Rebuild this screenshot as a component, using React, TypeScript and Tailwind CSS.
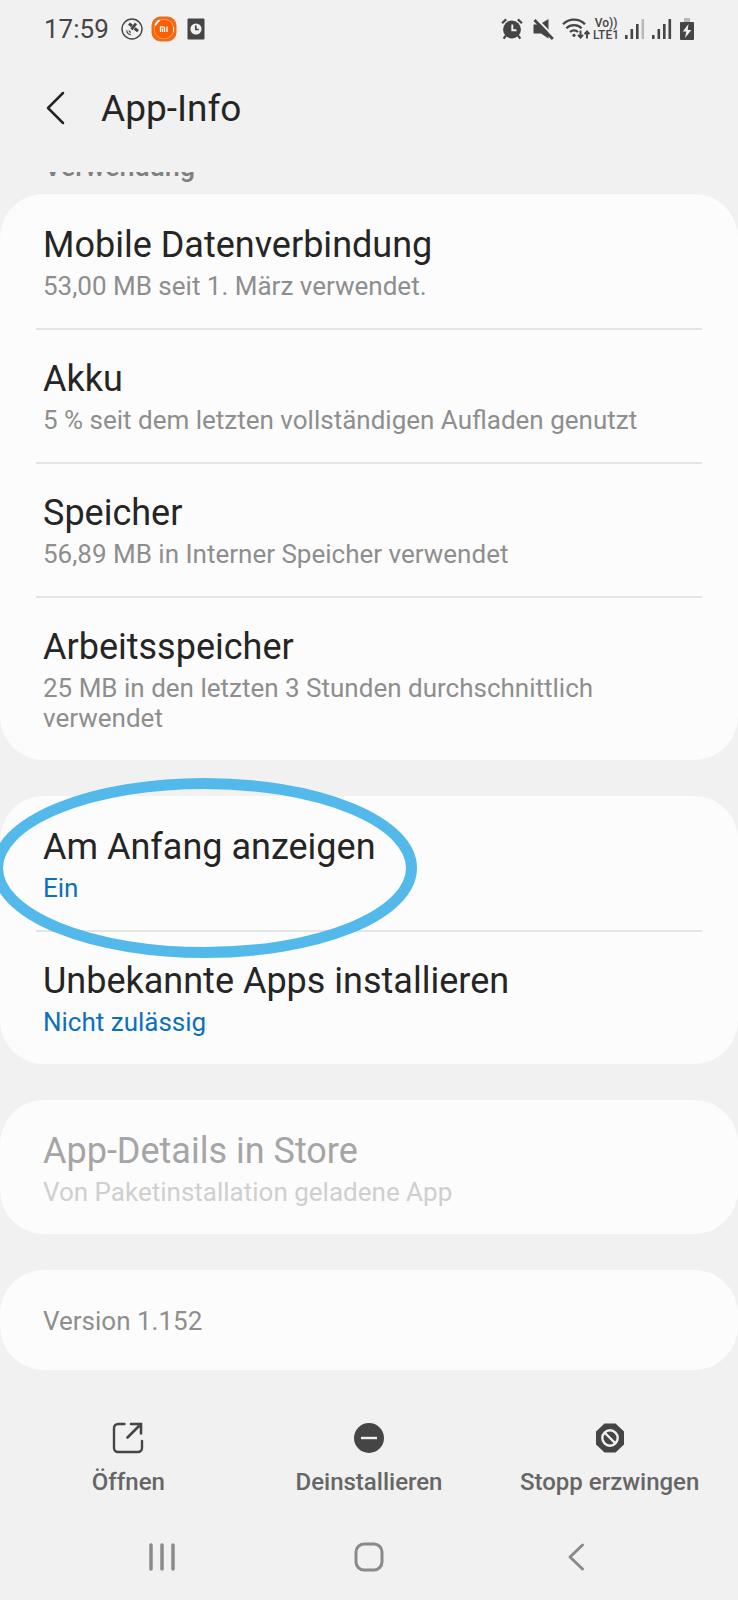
import type { ReactNode } from "react";

interface Item {
  title: string;
  sub: string;
  tone?: "link" | "disabled";
}

const USAGE: Item[] = [
  { title: "Mobile Datenverbindung", sub: "53,00 MB seit 1. März verwendet." },
  { title: "Akku", sub: "5 % seit dem letzten vollständigen Aufladen genutzt" },
  { title: "Speicher", sub: "56,89 MB in Interner Speicher verwendet" },
  { title: "Arbeitsspeicher", sub: "25 MB in den letzten 3 Stunden durchschnittlich verwendet" },
];

const SPECIAL: Item[] = [
  { title: "Am Anfang anzeigen", sub: "Ein", tone: "link" },
  { title: "Unbekannte Apps installieren", sub: "Nicht zulässig", tone: "link" },
];

const STORE: Item[] = [
  { title: "App-Details in Store", sub: "Von Paketinstallation geladene App", tone: "disabled" },
];

function Card({ items, children }: { items: Item[]; children?: ReactNode }) {
  return (
    <section className="relative rounded-[44px] bg-[#fcfcfc]">
      <ul>
        {items.map((item, i) => (
          <li key={item.title}>
            {i > 0 && <div className="mx-9 -mb-0.5 h-0.5 bg-[#e4e4e4]" />}
            <button
              type="button"
              disabled={item.tone === "disabled"}
              className="block w-full px-[43px] pt-[30px] pb-[27px] text-left"
            >
              <span
                className={`block text-[36px] leading-[42px] ${
                  item.tone === "disabled" ? "text-[#a5a5a5]" : "text-[#252525]"
                }`}
              >
                {item.title}
              </span>
              <span
                className={`mt-[5px] block text-[26px] leading-[30px] ${
                  item.tone === "link"
                    ? "text-[#0d70bd]"
                    : item.tone === "disabled"
                      ? "text-[#cfcfcf]"
                      : "text-[#8e8e8e]"
                }`}
              >
                {item.sub}
              </span>
            </button>
          </li>
        ))}
      </ul>
      {children}
    </section>
  );
}

function SignalBars({ weak }: { weak?: boolean }) {
  return (
    <svg width="20" height="22" viewBox="0 0 20 22" fill="#454545">
      <rect x="0" y="17" width="2.6" height="4" />
      <rect x="5.5" y="11" width="2.6" height="10" />
      <rect x="11" y="6" width="2.6" height="15" />
      <rect x="16.5" y="1" width="2.6" height="20" fill={weak ? "#b9b9b9" : "#454545"} />
    </svg>
  );
}

function StatusBar() {
  return (
    <div className="flex h-[57px] items-center justify-between pr-11 pl-11 text-[#454545]">
      <div className="flex items-center">
        <span className="text-[26px] leading-8">17:59</span>
        {/* Satellite */}
        <svg className="ml-3" width="22" height="22" viewBox="0 0 22 22" fill="none" stroke="#454545">
          <circle cx="11" cy="11" r="10" strokeWidth="1.4" />
          <path d="M8 5.600l3 2.400M13.600 10.400l3.400 2.800" strokeWidth="3" />
          <path d="M15 5.500L10.400 11.400" strokeWidth="2.8" />
          <path d="M5.800 12.200a4.600 4.600 0 0 0 4 4.400M8 12.400a2.400 2.400 0 0 0 1.900 2" strokeWidth="1.1" />
        </svg>
        {/* Mi */}
        <svg className="ml-2" width="26" height="26" viewBox="0 0 26 26">
          <rect x="0.5" y="0.5" width="25" height="25" rx="9" fill="#f26a12" />
          <circle cx="13" cy="13" r="9.8" fill="#fb5f04" stroke="#ff9a55" strokeWidth="1.1" />
          <path d="M4.600 8.600a9.600 9.600 0 0 1 3.400-3.900" fill="none" stroke="#fff" strokeWidth="2" strokeLinecap="round" />
          <path d="M22.600 11.500v4" fill="none" stroke="#fff" strokeWidth="1" strokeLinecap="round" />
          <path
            d="M9.500 16v-5.200h2.600a1.400 1.400 0 0 1 1.400 1.400V16M11.500 12.600V16M16 10.500V16"
            fill="none"
            stroke="#fff"
            strokeWidth="1.3"
          />
        </svg>
        {/* Clock */}
        <svg className="ml-2.5" width="18" height="22" viewBox="0 0 18 22">
          <rect x="0.5" y="0.5" width="17" height="21" rx="1" fill="#454545" />
          <circle cx="9" cy="11" r="5.600" fill="#f1f1f1" />
          <path d="M8.800 7.500v4h3" fill="none" stroke="#454545" strokeWidth="1.7" />
        </svg>
      </div>
      <div className="flex items-center">
        {/* Alarm */}
        <svg width="22" height="22" viewBox="0 0 22 22" fill="none" stroke="#454545">
          <circle cx="11" cy="11.5" r="8.900" fill="#454545" stroke="none" />
          <path d="M1 5.200l4.200-3.800M21 5.200l-4.200-3.800M5 17.500L2.600 20.600M17 17.500l2.400 3.100" strokeWidth="2.2" />
          <path d="M11.300 6.500v5.700h4.200" stroke="#f1f1f1" strokeWidth="1.9" />
        </svg>
        {/* Muted speaker */}
        <svg className="ml-2.5" width="21" height="22" viewBox="0 0 21 22">
          <path d="M0.500 6.500h6L15.500 1v19.500L8 15.500H0.500z" fill="#454545" />
          <path d="M3.800 1L20 17.700" stroke="#f1f1f1" strokeWidth="2" />
          <path d="M1.500 2L19.800 21" stroke="#454545" strokeWidth="2.800" />
        </svg>
        {/* Wi-Fi */}
        <svg className="ml-2" width="29" height="22" viewBox="0 0 29 22" fill="none" stroke="#454545">
          <path d="M1 6.300a15.500 15.500 0 0 1 22 0M4.300 10.300a11 11 0 0 1 15.400 0M8 14a6 6 0 0 1 8 0" strokeWidth="2.300" />
          <circle cx="12" cy="17.300" r="1.600" fill="#454545" stroke="none" />
          <path d="M18.500 12.500v7M16 16.800l2.500 2.700 2.500-2.700M25 20.500v-7M22.500 16.200l2.500-2.700 2.500 2.700" strokeWidth="1.900" />
        </svg>
        <span className="ml-0.5 flex flex-col items-center text-[12px] leading-[12px] font-medium">
          <span>Vo))</span>
          <span>LTE1</span>
        </span>
        <span className="ml-1.5 flex gap-[7px]">
          <SignalBars weak />
          <SignalBars />
        </span>
        {/* Battery */}
        <svg className="ml-2" width="14" height="22" viewBox="0 0 14 22">
          <rect x="4" y="0" width="6" height="5" fill="#b9b9b9" />
          <rect x="0" y="4" width="14" height="18" rx="1" fill="#454545" />
          <path d="M8.500 6L2.800 13.500h3.500L5 20l6.300-8H7.700z" fill="#f1f1f1" />
        </svg>
      </div>
    </div>
  );
}

const ACTIONS = [
  {
    label: "Öffnen",
    icon: (
      <svg width="32" height="32" viewBox="0 0 32 32" fill="none" stroke="#454545" strokeWidth="2.4" strokeLinecap="round">
        <path d="M12.500 2H6a4 4 0 0 0-4 4v20a4 4 0 0 0 4 4h20a4 4 0 0 0 4-4v-7" />
        <path d="M19 2h10v9.500M28.500 2.500L15.500 15.500" strokeWidth="2.600" />
      </svg>
    ),
  },
  {
    label: "Deinstallieren",
    icon: (
      <svg width="32" height="32" viewBox="0 0 32 32">
        <circle cx="16" cy="16" r="15" fill="#454545" />
        <path d="M8 16h16" stroke="#f1f1f1" strokeWidth="2.400" />
      </svg>
    ),
  },
  {
    label: "Stopp erzwingen",
    icon: (
      <svg width="32" height="32" viewBox="0 0 32 32">
        <path d="M10.500 1.500h11l8.500 8v13l-8.500 8h-11l-8.500-8v-13z" fill="#454545" />
        <circle cx="16" cy="16" r="7.700" fill="none" stroke="#f1f1f1" strokeWidth="2.400" />
        <path d="M10.500 10.500l11 11" stroke="#f1f1f1" strokeWidth="2.400" />
      </svg>
    ),
  },
];

export default function App() {
  return (
    <div className="flex min-h-screen flex-col overflow-hidden bg-[#f1f1f1] font-[Roboto,sans-serif]">
      <StatusBar />

      <header className="flex h-[104px] items-center pl-11">
        <button type="button" aria-label="Zurück" className="flex h-12 w-[57px] items-center">
          <svg width="24" height="36" viewBox="0 0 24 36" fill="none" stroke="#252525" strokeWidth="2.500" strokeLinecap="round" strokeLinejoin="round">
            <path d="M19 2L4 17l15 15" />
          </svg>
        </button>
        <h1 className="text-[37px] leading-[44px] text-[#252525]">App-Info</h1>
      </header>

      <main className="mt-[11px] flex-1">
        {/* Section heading, half scrolled under the header */}
        <div className="flex h-[22px] items-end overflow-hidden px-11">
          <h2 className="text-[27px] leading-[54px] font-medium text-[#808080]">Verwendung</h2>
        </div>

        <div className="flex flex-col gap-9">
          <Card items={USAGE} />
          <Card items={SPECIAL}>
            {/* Highlight ring */}
            <svg
              className="pointer-events-none absolute -top-[18px] -left-2"
              width="425"
              height="180"
              viewBox="0 0 425 180"
              fill="none"
            >
              <ellipse cx="212.500" cy="90" rx="207" ry="84.500" stroke="#53b9ea" strokeWidth="11" />
            </svg>
          </Card>
          <Card items={STORE} />
          <section className="rounded-[44px] bg-[#fcfcfc] px-[43px] pt-9 pb-[34px]">
            <p className="text-[26px] leading-[30px] text-[#8e8e8e]">Version 1.152</p>
          </section>
        </div>
      </main>

      <div className="grid grid-cols-3 px-2 pb-4">
        {ACTIONS.map((a) => (
          <button key={a.label} type="button" className="flex flex-col items-center gap-3">
            {a.icon}
            <span className="text-[24px] leading-8 font-medium whitespace-nowrap text-[#666666]">{a.label}</span>
          </button>
        ))}
      </div>

      <nav className="grid h-[86px] grid-cols-3 px-[58px]">
        <button type="button" aria-label="Letzte Apps" className="flex items-center justify-center">
          <svg width="28" height="30" viewBox="0 0 28 30" stroke="#8a8a8a" strokeWidth="3.500" strokeLinecap="round">
            <path d="M3 3v24M14 3v24M25 3v24" />
          </svg>
        </button>
        <button type="button" aria-label="Startseite" className="flex items-center justify-center">
          <svg width="30" height="30" viewBox="0 0 30 30" fill="none" stroke="#8a8a8a" strokeWidth="3">
            <rect x="2" y="2" width="26" height="26" rx="8" />
          </svg>
        </button>
        <button type="button" aria-label="Zurück" className="flex items-center justify-center">
          <svg width="18" height="30" viewBox="0 0 18 30" fill="none" stroke="#8a8a8a" strokeWidth="3" strokeLinecap="round" strokeLinejoin="round">
            <path d="M15.500 3L3 15l12.500 12" />
          </svg>
        </button>
      </nav>
    </div>
  );
}
